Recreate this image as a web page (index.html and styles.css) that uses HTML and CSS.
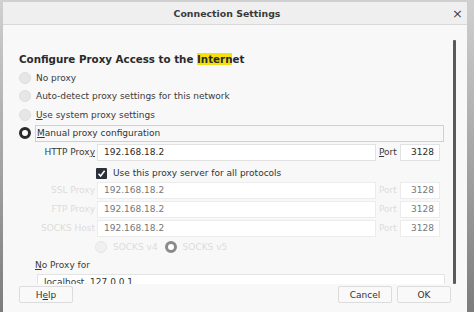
FILE: index.html
```html
<!DOCTYPE html>
<html lang="en">
<head>
    <meta charset="UTF-8">
    <title>Connection Settings</title>
    <link rel="stylesheet" href="styles.css">
</head>
<body>
    <div class="dialog">
        <div class="titlebar">
            <span class="title">Connection Settings</span>
            <span class="close">&times;</span>
        </div>
        <div class="scroll-area">
            <div class="content">
                <h1>Configure Proxy Access to the <mark>Intern</mark>et</h1>
                <div class="radio-list">
                    <div class="radio-row disabled-radio"><span class="radio"></span><span>No proxy</span></div>
                    <div class="radio-row disabled-radio"><span class="radio"></span><span>Auto-detect proxy settings for this network</span></div>
                    <div class="radio-row disabled-radio"><span class="radio"></span><span><u>U</u>se system proxy settings</span></div>
                    <div class="radio-row"><span class="radio checked"></span><span class="focus-box"><u>M</u>anual proxy configuration</span></div>
                </div>
                <div class="proxy-grid">
                    <label class="proxy-label">HTTP Prox<u>y</u></label>
                    <div class="field">192.168.18.2</div>
                    <label class="port-label"><u>P</u>ort</label>
                    <div class="field port">3128</div>

                    <div class="check-row">
                        <span class="checkbox">
                            <svg width="9" height="9" viewBox="0 0 9 9"><path d="M1.5 4.8 L3.6 7 L7.6 1.8" fill="none" stroke="#fff" stroke-width="1.5"/></svg>
                        </span>
                        <span>Use this proxy server for all protocols</span>
                    </div>

                    <label class="proxy-label faded">SSL Proxy</label>
                    <div class="field dim">192.168.18.2</div>
                    <label class="port-label faded">Port</label>
                    <div class="field port dim">3128</div>

                    <label class="proxy-label faded">FTP Proxy</label>
                    <div class="field dim">192.168.18.2</div>
                    <label class="port-label faded">Port</label>
                    <div class="field port dim">3128</div>

                    <label class="proxy-label faded">SOCKS Host</label>
                    <div class="field dim">192.168.18.2</div>
                    <label class="port-label faded">Port</label>
                    <div class="field port dim">3128</div>

                    <div class="socks-row">
                        <span class="radio small-disabled"></span><span class="faded">SOCKS v4</span>
                        <span class="radio checked-disabled"></span><span class="faded">SOCKS v5</span>
                    </div>
                </div>
                <div class="no-proxy-label"><u>N</u>o Proxy for</div>
                <div class="no-proxy-field">localhost, 127.0.0.1</div>
            </div>
            <div class="scrollbar"><div class="thumb"></div></div>
        </div>
        <div class="button-row">
            <button class="btn">H<u>e</u>lp</button>
            <div class="spacer"></div>
            <button class="btn">Cancel</button>
            <button class="btn">OK</button>
        </div>
    </div>
</body>
</html>
```

FILE: styles.css
```css
* {
    margin: 0;
    padding: 0;
    box-sizing: border-box;
}

body {
    width: 474px;
    height: 312px;
    overflow: hidden;
    background: linear-gradient(to bottom, #d0d0d0, #7c7c7c);
    font-family: 'DejaVu Sans', sans-serif;
    font-size: 9px;
    color: #2e3436;
}

.dialog {
    margin: 2px 7px 0 3px;
    height: 310px;
    background: #f8f8f8;
    display: flex;
    flex-direction: column;
}

.titlebar {
    height: 23px;
    flex-shrink: 0;
    background: #efefef;
    border-bottom: 1px solid #d8d8d8;
    display: flex;
    align-items: center;
    justify-content: center;
    padding-right: 16px;
    position: relative;
}

.title {
    font-weight: bold;
    font-size: 9.4px;
    color: #3a3a3a;
}

.close {
    position: absolute;
    right: 4px;
    top: 4px;
    font-size: 13px;
    color: #444;
}

.scroll-area {
    height: 259px;
    display: flex;
    overflow: hidden;
    flex-shrink: 0;
}

.content {
    flex: 1;
    padding: 26px 0 0 16px;
}

h1 {
    font-size: 10.3px;
    font-weight: bold;
    line-height: 16px;
    color: #2a2a2a;
    margin-bottom: 2px;
}

mark {
    background: #f4e10c;
    color: inherit;
}

.radio-list {
    display: flex;
    flex-direction: column;
    gap: 1.5px;
}

.radio-row {
    height: 17px;
    display: flex;
    align-items: center;
    gap: 5px;
}

.disabled-radio {
    color: #3a3a3a;
}

.radio {
    width: 12px;
    height: 12px;
    border-radius: 50%;
    background: #e6e6e6;
    border: 1px solid #dedede;
    flex-shrink: 0;
}

.radio.checked {
    background: #fff;
    border: 3px solid #2a2a2a;
}

.focus-box {
    flex: 1;
    height: 17px;
    line-height: 15px;
    border: 1px solid #cfcfcf;
    padding-left: 1px;
    margin-left: -1px;
    margin-right: 7px;
}

.proxy-grid {
    margin-top: 2px;
    display: grid;
    grid-template-columns: 76px 279px 20px 40px;
    column-gap: 2px;
    row-gap: 2px;
    grid-auto-rows: 17px;
}

.proxy-label {
    text-align: right;
    line-height: 17px;
    color: #3a3a3a;
}

.port-label {
    line-height: 17px;
    padding-left: 1px;
    color: #3a3a3a;
}

.faded {
    color: #dcdcdc;
}

.field {
    background: #fff;
    border: 1px solid #e2e2e2;
    line-height: 15px;
    padding-left: 6px;
    color: #2a2a2a;
}

.field.port {
    text-align: right;
    padding: 0 5px 0 0;
}

.field.dim {
    color: #777;
    border-color: #ececec;
}

.check-row {
    grid-column: 2 / 5;
    display: flex;
    align-items: center;
    gap: 6px;
    margin-left: -1px;
    height: 19px;
    margin-top: 1px;
}

.checkbox {
    width: 11px;
    height: 11px;
    background: #2b3038;
    border-radius: 1px;
    display: flex;
    align-items: center;
    justify-content: center;
}

.socks-row {
    grid-column: 2 / 5;
    display: flex;
    align-items: center;
    margin-left: -2px;
}

.socks-row .faded {
    margin-left: 6px;
    margin-right: 7px;
}

.radio.small-disabled {
    background: #f0f0f0;
    border: 1px solid #e6e6e6;
}

.radio.checked-disabled {
    background: #fff;
    border: 3px solid #8a8a8a;
}

.no-proxy-label {
    margin-top: 1px;
    margin-left: 16px;
    line-height: 16px;
    color: #3a3a3a;
}

.no-proxy-field {
    margin: 1px 6px 0 18px;
    height: 17px;
    background: #fff;
    border: 1px solid #e4e4e4;
    padding-left: 6px;
    line-height: 15px;
}

.scrollbar {
    width: 16px;
    padding: 15px 0 0 2px;
}

.thumb {
    width: 3px;
    height: 100%;
    background: #5a5a5a;
    border-radius: 1px;
}

.button-row {
    display: flex;
    gap: 5px;
    padding: 2px 16px 0 16px;
}

.spacer {
    flex: 1;
}

.btn {
    width: 54px;
    height: 17px;
    font-family: 'DejaVu Sans', sans-serif;
    font-size: 9px;
    color: #2e3436;
    background: #f9f9f9;
    border: 1px solid #dcdcdc;
    border-radius: 2px;
}
```
